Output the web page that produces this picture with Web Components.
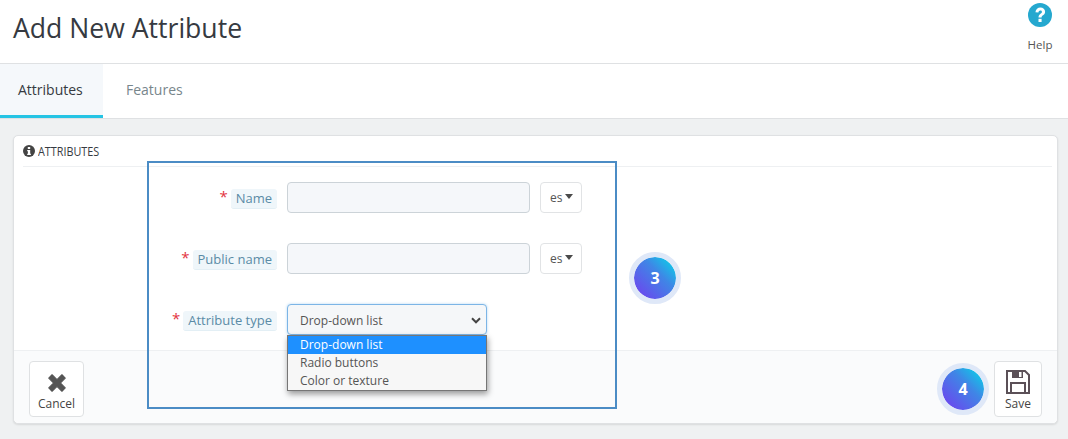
<!DOCTYPE html>
<html lang="en">
<head>
<meta charset="utf-8">
<title>Add New Attribute</title>
<style>
html, body { margin: 0; padding: 0; }
body {
  width: 1068px;
  height: 439px;
  overflow: hidden;
  background: #eff1f2;
  color: #363a41;
  font-family: "Open Sans", "Liberation Sans", sans-serif;
  position: relative;
}
</style>
</head>
<body>
<page-head heading="Add New Attribute"></page-head>
<tab-bar></tab-bar>
<attr-panel></attr-panel>
<step-frame></step-frame>
<step-badge n="3" style="left:629px;top:252px"></step-badge>
<step-badge n="4" style="left:937px;top:363px"></step-badge>

<script>
const headTemplate = document.createElement("template");
headTemplate.innerHTML = `
<style>
:host { display: flex; justify-content: space-between; box-sizing: border-box; height: 64px; background: #fff; border-bottom: 1px solid #dfe1e3; }
h1 { margin: 0; padding: 11px 0 0 13px; font-size: 26.600px; line-height: 34px; font-weight: 400; color: #363a41; }
.help { display: flex; flex-direction: column; align-items: center; width: 54px; margin-right: 1px; padding-top: 3px; font-size: 11.500px; color: #555; }
.help svg { display: block; margin-bottom: 10px; }
</style>
<h1></h1>
<div class="help">
  <svg width="24" height="24" viewBox="0 0 24 24">
    <circle cx="12" cy="12" r="12" fill="#25a8cf"/>
    <path d="M7.400 9.300C7.800 6.300 9.800 4.600 12.300 4.600c2.800 0 4.800 1.700 4.800 4.100 0 1.800-1 2.800-2.100 3.600-1 .7-1.400 1.100-1.400 2.200h-3.100c0-2 .8-3 2-3.800.9-.6 1.400-1.100 1.400-1.800 0-.9-.6-1.400-1.600-1.400-1.100 0-1.700.7-1.900 2.100z" fill="#fff"/>
    <rect x="10.500" y="15.800" width="3.100" height="3.200" fill="#fff"/>
  </svg>
  <span>Help</span>
</div>`;
class PageHead extends HTMLElement {
  constructor() {
    super();
    this.attachShadow({ mode: "open" });
    this.shadowRoot.appendChild(headTemplate.content.cloneNode(true));
    this.shadowRoot.querySelector("h1").textContent = this.getAttribute("heading");
  }
}
customElements.define("page-head", PageHead);

const tabsTemplate = document.createElement("template");
tabsTemplate.innerHTML = `
<style>
:host { display: flex; box-sizing: border-box; height: 55px; background: #fff; border-bottom: 1px solid #dfe1e3; font-size: 14px; }
a { display: block; box-sizing: border-box; height: 54px; padding: 16px 18px 0; line-height: 20px; color: #78868c; }
a.active { width: 103px; background: #f5f8fb; border-bottom: 3px solid #25c4e4; color: #363a41; }
a + a { padding-left: 23px; }
</style>
<a class="active">Attributes</a>
<a>Features</a>`;
class TabBar extends HTMLElement {
  constructor() {
    super();
    this.attachShadow({ mode: "open" });
    this.shadowRoot.appendChild(tabsTemplate.content.cloneNode(true));
  }
}
customElements.define("tab-bar", TabBar);

const rowStyle = `
.label { display: flex; justify-content: flex-end; align-items: center; gap: 3px; height: 31px; font-size: 13px; }
.star { color: #e3333f; font-size: 15px; line-height: 15px; margin-top: -3px; }
.text { background: #eff6fa; color: #5a8ba6; padding: 0 5px; height: 19px; line-height: 19px; border-bottom: 1px solid #e3eff5; border-radius: 3px; margin-top: 3px; }
`;

const fieldTemplate = document.createElement("template");
fieldTemplate.innerHTML = `
<style>
:host { display: grid; grid-template-columns: 254px 243px auto; column-gap: 10px; align-items: start; height: 61px; }
${rowStyle}
.input { box-sizing: border-box; height: 31px; background: #f5f7fa; border: 1px solid #ccd3d8; border-radius: 4px; }
.lang { box-sizing: border-box; display: flex; align-items: center; width: 42px; height: 31px; padding-left: 9px; gap: 3px; background: #fff; border: 1px solid #e1e3e5; border-radius: 4px; font-size: 12px; color: #555; }
.lang i { width: 0; height: 0; margin-top: -3px; border: 4.500px solid transparent; border-top: 5px solid #4a4a4a; border-bottom: 0; }
</style>
<div class="label"><span class="star">*</span><span class="text"><slot></slot></span></div>
<div class="input"></div>
<div class="lang">es<i></i></div>`;
class FieldRow extends HTMLElement {
  constructor() {
    super();
    this.attachShadow({ mode: "open" });
    this.shadowRoot.appendChild(fieldTemplate.content.cloneNode(true));
  }
}
customElements.define("field-row", FieldRow);

const selectTemplate = document.createElement("template");
selectTemplate.innerHTML = `
<style>
:host { display: grid; grid-template-columns: 254px 200px; column-gap: 10px; align-items: start; position: relative; }
${rowStyle}
.select { box-sizing: border-box; display: flex; justify-content: space-between; align-items: center; height: 31px; padding: 1px 5px 0 12px; background: #f5f7f9; border: 1px solid #7cb5e6; border-radius: 4px; box-shadow: 0 0 3px #b5d7f3; font-size: 12px; color: #555; }
.menu { position: absolute; left: 264px; top: 31px; box-sizing: border-box; width: 200px; height: 56px; background: #f7f7f7; border: 1px solid #767676; box-shadow: 1px 3px 6px rgba(0,0,0,.4); font-size: 12px; color: #555; }
.menu div { height: 18px; line-height: 18px; padding-left: 12px; }
.menu .on { background: #1e90ff; color: #fff; }
</style>
<div class="label"><span class="star">*</span><span class="text"><slot></slot></span></div>
<div class="select">Drop-down list
  <svg width="10" height="7" viewBox="0 0 10 7"><path d="M1 1.300 5 5.300 9 1.300" fill="none" stroke="#444" stroke-width="2"/></svg>
</div>
<div class="menu"><div class="on">Drop-down list</div><div>Radio buttons</div><div>Color or texture</div></div>`;
class SelectRow extends HTMLElement {
  constructor() {
    super();
    this.attachShadow({ mode: "open" });
    this.shadowRoot.appendChild(selectTemplate.content.cloneNode(true));
  }
}
customElements.define("select-row", SelectRow);

const panelTemplate = document.createElement("template");
panelTemplate.innerHTML = `
<style>
:host { display: block; box-sizing: border-box; width: 1045px; height: 289px; margin: 16px 0 0 13px; background: #fff; border: 1px solid #dfe1e3; border-radius: 5px; box-shadow: 0 1px 2px rgba(0,0,0,.1); }
header { display: flex; align-items: center; gap: 3px; height: 31px; margin: 0 5px 0 9px; border-bottom: 1px solid #eef0f2; box-sizing: border-box; font-size: 13.500px; color: #363a41; }
header svg { display: block; flex: none; }
header span { display: inline-block; transform: scaleX(.8); transform-origin: left center; white-space: nowrap; }
.form { height: 183px; padding-top: 15px; box-sizing: border-box; padding-left: 9px; position: relative; z-index: 1; }
footer { display: flex; justify-content: space-between; box-sizing: border-box; height: 73px; padding: 10px 15px 0; background: #fafbfc; border-top: 1px solid #eef0f2; border-radius: 0 0 5px 5px; }
.btn { box-sizing: border-box; display: flex; flex-direction: column; align-items: center; height: 56px; background: #fff; border: 1px solid #dfe1e3; border-radius: 4px; font-size: 12px; color: #444; }
.cancel { width: 55px; padding-top: 10px; }
.save { width: 48px; padding-top: 7px; }
.cancel span { margin-top: 1px; }
.save span { margin-top: 0; }
</style>
<header>
  <svg width="12" height="12" viewBox="0 0 12 12">
    <circle cx="6" cy="6" r="6" fill="#444"/>
    <rect x="4.800" y="2" width="2.400" height="2" fill="#fff"/>
    <path d="M4.200 5h3v3.800h.7V10H4.200V8.800h.7V6.200h-.7z" fill="#fff"/>
  </svg>
  <span>ATTRIBUTES</span>
</header>
<div class="form">
  <field-row>Name</field-row>
  <field-row>Public name</field-row>
  <select-row>Attribute type</select-row>
</div>
<footer>
  <div class="btn cancel">
    <svg width="22" height="22" viewBox="0 0 20 20"><path d="M2.500 5.500 5.500 2.500 10 7l4.500-4.500 3 3L13 10l4.500 4.500-3 3L10 13l-4.500 4.500-3-3L7 10z" fill="#555" stroke="#555" stroke-linejoin="round"/></svg>
    <span>Cancel</span>
  </div>
  <div class="btn save">
    <svg width="26" height="26" viewBox="0 0 26 26">
      <path d="M2 2h18l4 4v18H2z" fill="none" stroke="#5b5057" stroke-width="2"/>
      <path d="M7 2h11v7H7z" fill="#5b5057"/>
      <rect x="14" y="3" width="2.500" height="5" fill="#fff"/>
      <path d="M6 24V14h14v10" fill="none" stroke="#5b5057" stroke-width="2"/>
    </svg>
    <span>Save</span>
  </div>
</footer>`;
class AttrPanel extends HTMLElement {
  constructor() {
    super();
    this.attachShadow({ mode: "open" });
    this.shadowRoot.appendChild(panelTemplate.content.cloneNode(true));
  }
}
customElements.define("attr-panel", AttrPanel);

// annotations laid over the screenshot
class StepFrame extends HTMLElement {
  constructor() {
    super();
    this.attachShadow({ mode: "open" }).innerHTML = `
<style>
:host { position: absolute; left: 147px; top: 161px; box-sizing: border-box; width: 470px; height: 248px; border: 2px solid #4b8cc5; pointer-events: none; }
</style>`;
  }
}
customElements.define("step-frame", StepFrame);

class StepBadge extends HTMLElement {
  constructor() {
    super();
    this.attachShadow({ mode: "open" }).innerHTML = `
<style>
:host { position: absolute; box-sizing: content-box; display: flex; align-items: center; justify-content: center; width: 42px; height: 42px; border: 5px solid #dfe8f8; border-radius: 50%; background: linear-gradient(45deg, #6b47ee 10%, #3f86e6 60%, #10c8e8 90%); background-origin: padding-box; background-clip: padding-box; color: #fff; font-size: 16px; font-weight: 700; }
</style>${this.getAttribute("n")}`;
  }
}
customElements.define("step-badge", StepBadge);
</script>
</body>
</html>
